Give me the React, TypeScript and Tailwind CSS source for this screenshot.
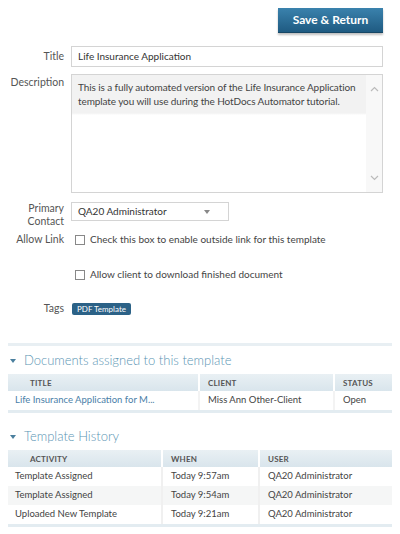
import React from 'react';

const font = { fontFamily: 'Lato, "Open Sans", Arial, sans-serif' };

const Label: React.FC<{ children: React.ReactNode; className?: string }> = ({ children, className = '' }) => (
    <div className={`w-[64px] shrink-0 text-right text-[10.5px] leading-[13px] text-[#555] ${className}`}>{children}</div>
);

const Checkbox: React.FC = () => (
    <span className="inline-block w-[10px] h-[10px] border border-[#888] bg-white shrink-0" />
);

const Caret: React.FC = () => (
    <svg width="6" height="4" viewBox="0 0 6 4" className="shrink-0">
        <path d="M0 0 L6 0 L3 4 Z" fill="#4a7f9e" />
    </svg>
);

const docs = [{ title: 'Life Insurance Application for M...', client: 'Miss Ann Other-Client', status: 'Open' }];

const history = [
    { activity: 'Template Assigned', when: 'Today 9:57am', user: 'QA20 Administrator' },
    { activity: 'Template Assigned', when: 'Today 9:54am', user: 'QA20 Administrator' },
    { activity: 'Uploaded New Template', when: 'Today 9:21am', user: 'QA20 Administrator' },
];

const headCell = 'text-[8px] font-bold tracking-[0.2px] text-[#555] flex items-center';

const App: React.FC = () => {
    return (
        <div className="w-[400px] h-[534px] bg-white overflow-hidden" style={font}>
            {/* Top action */}
            <div className="flex justify-end pt-[8px] pr-[17px]">
                <button className="w-[105px] h-[25px] bg-gradient-to-b from-[#3a82ad] to-[#1f5b82] text-white text-[12px] font-bold shadow-[0_2px_2px_rgba(0,0,0,0.25)] border-b border-[#174765]">
                    Save &amp; Return
                </button>
            </div>

            {/* Form */}
            <div className="pr-[17px] flex flex-col">
                <div className="flex items-center gap-[7px] mt-[13px]">
                    <Label>Title</Label>
                    <div className="flex-1 h-[21px] border border-[#d4d4d4] px-[6px] flex items-center text-[10px] text-[#333]">
                        Life Insurance Application
                    </div>
                </div>

                <div className="flex gap-[7px] mt-[7px]">
                    <Label className="pt-[2px]">Description</Label>
                    <div className="flex-1 h-[119px] border border-[#d4d4d4] flex bg-[linear-gradient(#f2f2f2_0px,#f2f2f2_38px,#ffffff_40px)]">
                        <div className="flex-1 pl-[6px] pt-[5px] text-[10px] tracking-[-0.1px] leading-[14px] text-[#444]">
                            This is a fully automated version of the Life Insurance Application template you will use during the HotDocs Automator tutorial.
                        </div>
                        <div className="w-[16px] bg-[#f8f8f8] flex flex-col justify-between items-center py-[11px]">
                            <svg width="9" height="6" viewBox="0 0 9 6"><path d="M1 5 L4.5 1.5 L8 5" stroke="#bbb" strokeWidth="1.2" fill="none" /></svg>
                            <svg width="9" height="6" viewBox="0 0 9 6"><path d="M1 1 L4.5 4.5 L8 1" stroke="#bbb" strokeWidth="1.2" fill="none" /></svg>
                        </div>
                    </div>
                </div>

                <div className="flex gap-[7px] mt-[9px]">
                    <Label className="leading-[10px] h-[20px]">Primary<br />Contact</Label>
                    <div className="w-[158px] h-[19px] border border-[#d4d4d4] flex items-center justify-between px-[6px] text-[10px] text-[#333]">
                        <span>QA20 Administrator</span>
                        <svg width="6" height="4" viewBox="0 0 6 4" className="mr-[12px]"><path d="M0 0 L6 0 L3 4 Z" fill="#888" /></svg>
                    </div>
                </div>

                <div className="flex items-center gap-[7px] mt-[11px]">
                    <Label>Allow Link</Label>
                    <div className="flex items-center gap-[5px] pl-[4px] text-[10px] leading-[13px] text-[#444]">
                        <Checkbox />
                        <span>Check this box to enable outside link for this template</span>
                    </div>
                </div>

                <div className="flex items-center gap-[7px] mt-[22px]">
                    <div className="w-[64px] shrink-0" />
                    <div className="flex items-center gap-[5px] pl-[4px] text-[10px] leading-[13px] text-[#444]">
                        <Checkbox />
                        <span>Allow client to download finished document</span>
                    </div>
                </div>

                <div className="flex items-center gap-[7px] mt-[21px]">
                    <Label>Tags</Label>
                    <span className="ml-[1px] h-[12px] px-[5px] rounded-[2px] bg-[#2c6287] text-white text-[8px] leading-[12px] flex items-center">PDF Template</span>
                </div>
            </div>

            {/* Documents */}
            <div className="mx-[8px] mt-[28px] h-[3px] bg-[#e8eff3]" />
            <div className="px-[8px]">
                <div className="flex items-center gap-[8px] pl-[2px] h-[18px] mt-[6px] text-[13px] font-light text-[#5b95b4]">
                    <Caret />
                    <span>Documents assigned to this template</span>
                </div>
                <div className="mt-[4px] border-b-[3px] border-[#e3ecf1]">
                    <div className="grid grid-cols-[192px_135px_1fr] h-[17px] bg-gradient-to-b from-[#e9f0f4] to-[#d9e5ec]">
                        <div className={`${headCell} pl-[22px] border-r-2 border-white`}>TITLE</div>
                        <div className={`${headCell} pl-[8px] border-r-2 border-white`}>CLIENT</div>
                        <div className={`${headCell} pl-[8px]`}>STATUS</div>
                    </div>
                    {docs.map((d) => (
                        <div key={d.title} className="grid grid-cols-[192px_135px_1fr] h-[19px] text-[9.5px]">
                            <div className="pl-[7px] flex items-center text-[#4a80a8] border-r-2 border-[#f3f3f3]">{d.title}</div>
                            <div className="pl-[8px] flex items-center text-[#444] border-r-2 border-[#f3f3f3]">{d.client}</div>
                            <div className="pl-[8px] flex items-center text-[#444]">{d.status}</div>
                        </div>
                    ))}
                </div>

                {/* History */}
                <div className="flex items-center gap-[8px] pl-[2px] h-[18px] mt-[15px] text-[13px] font-light text-[#5b95b4]">
                    <Caret />
                    <span>Template History</span>
                </div>
                <div className="mt-[4px] border-b-[3px] border-[#e3ecf1]">
                    <div className="grid grid-cols-[155px_97px_1fr] h-[17px] bg-gradient-to-b from-[#e9f0f4] to-[#d9e5ec]">
                        <div className={`${headCell} pl-[22px] border-r-2 border-white`}>ACTIVITY</div>
                        <div className={`${headCell} pl-[8px] border-r-2 border-white`}>WHEN</div>
                        <div className={`${headCell} pl-[8px]`}>USER</div>
                    </div>
                    {history.map((h, i) => (
                        <div key={i} className={`grid grid-cols-[155px_97px_1fr] h-[19px] text-[9.5px] text-[#444] ${i % 2 === 1 ? 'bg-[#f5f6f6]' : 'bg-white'}`}>
                            <div className="pl-[7px] flex items-center border-r-2 border-[#f0f0f0]">{h.activity}</div>
                            <div className="pl-[8px] flex items-center border-r-2 border-[#f0f0f0]">{h.when}</div>
                            <div className="pl-[8px] flex items-center">{h.user}</div>
                        </div>
                    ))}
                </div>
            </div>
        </div>
    );
};

export default App;
